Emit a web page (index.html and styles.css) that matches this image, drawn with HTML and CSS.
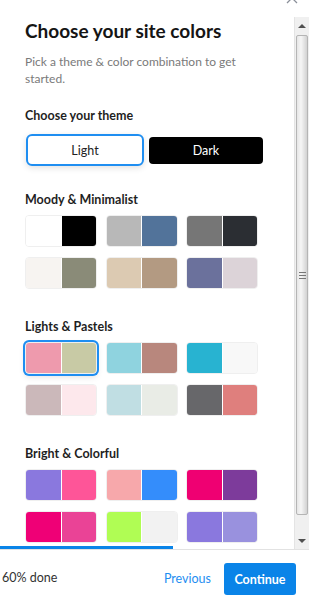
FILE: index.html
```html
<!DOCTYPE html>
<html lang="en">
  <head>
    <meta charset="UTF-8" />
    <meta name="viewport" content="width=device-width,initial-scale=1.0" />
    <title>Choose your site colors</title>
    <link rel="stylesheet" href="styles.css">
  </head>
  <body>
    <div class="modal">
      <div class="modal-top">
        <svg class="close-icon" width="12" height="12" viewBox="0 0 12 12">
          <path d="M1 1 L11 11 M11 1 L1 11" stroke="#8a8f99" stroke-width="1.3" fill="none" />
        </svg>
      </div>
      <div class="modal-body">
        <div class="content-col">
          <div class="scroll-area">
            <h2>Choose your site colors</h2>
            <p class="subtitle">Pick a theme &amp; color combination to get started.</p>

            <h3 class="theme-title">Choose your theme</h3>
            <div class="theme-buttons">
              <button type="button" class="theme-btn light">Light</button>
              <button type="button" class="theme-btn dark">Dark</button>
            </div>

            <h3 class="group-title first">Moody &amp; Minimalist</h3>
            <div class="swatches">
              <div class="swatch"><span style="background:#ffffff"></span><span style="background:#000000"></span></div>
              <div class="swatch"><span style="background:#b8b8b8"></span><span style="background:#52739a"></span></div>
              <div class="swatch"><span style="background:#767676"></span><span style="background:#2b2e33"></span></div>
              <div class="swatch"><span style="background:#f7f4f1"></span><span style="background:#8a8b78"></span></div>
              <div class="swatch"><span style="background:#dccab2"></span><span style="background:#b39a82"></span></div>
              <div class="swatch"><span style="background:#6b719c"></span><span style="background:#dcd3d8"></span></div>
            </div>

            <h3 class="group-title">Lights &amp; Pastels</h3>
            <div class="swatches">
              <div class="swatch selected"><span style="background:#ee9aad"></span><span style="background:#c8caa5"></span></div>
              <div class="swatch"><span style="background:#8fd3df"></span><span style="background:#b8877d"></span></div>
              <div class="swatch"><span style="background:#28b3d1"></span><span style="background:#f8f8f8"></span></div>
              <div class="swatch"><span style="background:#cbb8ba"></span><span style="background:#fde8ec"></span></div>
              <div class="swatch"><span style="background:#c0dee3"></span><span style="background:#e9ece6"></span></div>
              <div class="swatch"><span style="background:#67676a"></span><span style="background:#df7f7d"></span></div>
            </div>

            <h3 class="group-title">Bright &amp; Colorful</h3>
            <div class="swatches">
              <div class="swatch"><span style="background:#8a78de"></span><span style="background:#fe5598"></span></div>
              <div class="swatch"><span style="background:#f7a8ab"></span><span style="background:#348dfb"></span></div>
              <div class="swatch"><span style="background:#ef0072"></span><span style="background:#7d3b9b"></span></div>
              <div class="swatch"><span style="background:#ef0076"></span><span style="background:#ea4396"></span></div>
              <div class="swatch"><span style="background:#b0fd54"></span><span style="background:#f2f2f2"></span></div>
              <div class="swatch"><span style="background:#8a78de"></span><span style="background:#9991de"></span></div>
            </div>
          </div>
          <div class="progress"><div class="progress-fill" style="width:173px"></div></div>
        </div>
        <div class="scrollbar">
          <div class="sb-btn"><span class="arrow-up"></span></div>
          <div class="sb-track">
            <div class="sb-thumb"><span class="grip"></span></div>
          </div>
          <div class="sb-btn"><span class="arrow-down"></span></div>
        </div>
      </div>
      <div class="modal-footer">
        <span class="done">60% done</span>
        <div class="footer-actions">
          <a href="#" class="prev-link">Previous</a>
          <button type="button" class="continue-btn">Continue</button>
        </div>
      </div>
    </div>
  </body>
</html>
```

FILE: styles.css
```css
* {
  margin: 0;
  padding: 0;
  box-sizing: border-box;
}
html, body {
  font-family: "Lato", "Open Sans", sans-serif;
  background: #fff;
  color: #1c1c1c;
  width: 309px;
  height: 604px;
  overflow: hidden;
}
.modal {
  display: flex;
  flex-direction: column;
  height: 604px;
}
.modal-top {
  height: 17px;
  display: flex;
  justify-content: flex-end;
  padding-right: 11px;
  overflow: hidden;
}
.close-icon {
  margin-top: -8px;
}
.modal-body {
  height: 532px;
  display: flex;
}
.content-col {
  flex: 1;
  display: flex;
  flex-direction: column;
}
.scroll-area {
  flex: 1;
  overflow: hidden;
  padding: 2px 0 0 25px;
}
h2 {
  font-size: 19px;
  font-weight: 700;
  line-height: 24px;
  color: #151515;
}
.subtitle {
  margin-top: 10px;
  font-size: 12px;
  line-height: 17px;
  color: #7a7a7a;
  width: 220px;
}
h3 {
  font-size: 12.5px;
  font-weight: 700;
  line-height: 16px;
  color: #1f1f1f;
}
.theme-title {
  margin-top: 21px;
}
.theme-buttons {
  margin-top: 10px;
  display: flex;
  align-items: center;
  gap: 5px;
  margin-left: 1px;
}
.theme-btn {
  font-family: "Lato", "Open Sans", sans-serif;
  font-size: 12.5px;
  border: none;
}
.theme-btn.light {
  width: 118px;
  height: 32px;
  background: #fff;
  color: #222;
  border: 2px solid #1f8ef1;
  border-radius: 6px;
  box-shadow: 0 2px 6px rgba(0,0,0,0.12);
}
.theme-btn.dark {
  width: 114px;
  height: 27px;
  background: #000;
  color: #fff;
  border-radius: 4px;
}
.group-title {
  margin-top: 30px;
  margin-bottom: 7px;
}
.group-title.first {
  margin-top: 26px;
}
.swatches {
  display: grid;
  grid-template-columns: repeat(3, 72px);
  column-gap: 8.5px;
  row-gap: 10px;
}
.swatch {
  height: 32px;
  display: flex;
  gap: 1px;
  background: #fff;
  border: 1px solid #efefef;
  border-radius: 4px;
  overflow: hidden;
}
.swatch span {
  flex: 1;
}
.swatch.selected {
  box-shadow: 0 0 0 2px #1f8ef1, 0 3px 6px rgba(0,0,0,0.12);
}
.progress {
  height: 3px;
}
.progress-fill {
  height: 3px;
  background: #0a84e8;
}
.scrollbar {
  width: 15px;
  display: flex;
  flex-direction: column;
  background: #f0f0f0;
  border-left: 1px solid #e4e4e4;
}
.sb-btn {
  height: 17px;
  display: flex;
  align-items: center;
  justify-content: center;
}
.arrow-up {
  width: 0;
  height: 0;
  border-left: 4px solid transparent;
  border-right: 4px solid transparent;
  border-bottom: 4px solid #505050;
}
.arrow-down {
  width: 0;
  height: 0;
  border-left: 4px solid transparent;
  border-right: 4px solid transparent;
  border-top: 4px solid #505050;
}
.sb-track {
  flex: 1;
  padding: 1px 1px 0;
  display: flex;
  flex-direction: column;
}
.sb-thumb {
  height: 480px;
  border: 1px solid #b5b5b5;
  border-radius: 2px;
  background: linear-gradient(to right, #e6e6e6, #f6f6f6 40%, #d2d2d2);
  display: flex;
  align-items: center;
  justify-content: center;
}
.grip {
  width: 7px;
  height: 7px;
  border-top: 1px solid #777;
  border-bottom: 1px solid #777;
  position: relative;
}
.grip::after {
  content: "";
  display: block;
  margin-top: 2px;
  height: 1px;
  background: #777;
}
.modal-footer {
  flex: 1;
  border-top: 1px solid #e2e2e2;
  display: flex;
  align-items: center;
  justify-content: space-between;
  padding: 0 13px 0 2px;
}
.done {
  font-size: 12.5px;
  color: #333;
}
.footer-actions {
  display: flex;
  align-items: center;
  gap: 13px;
}
.prev-link {
  font-size: 12.5px;
  color: #1f8ef1;
  text-decoration: none;
  margin-top: 3px;
}
.continue-btn {
  font-family: "Lato", "Open Sans", sans-serif;
  width: 72px;
  height: 32px;
  background: #0a84e8;
  color: #fff;
  font-weight: 700;
  font-size: 12.5px;
  border: none;
  border-radius: 3px;
  margin-top: 4px;
}
```
